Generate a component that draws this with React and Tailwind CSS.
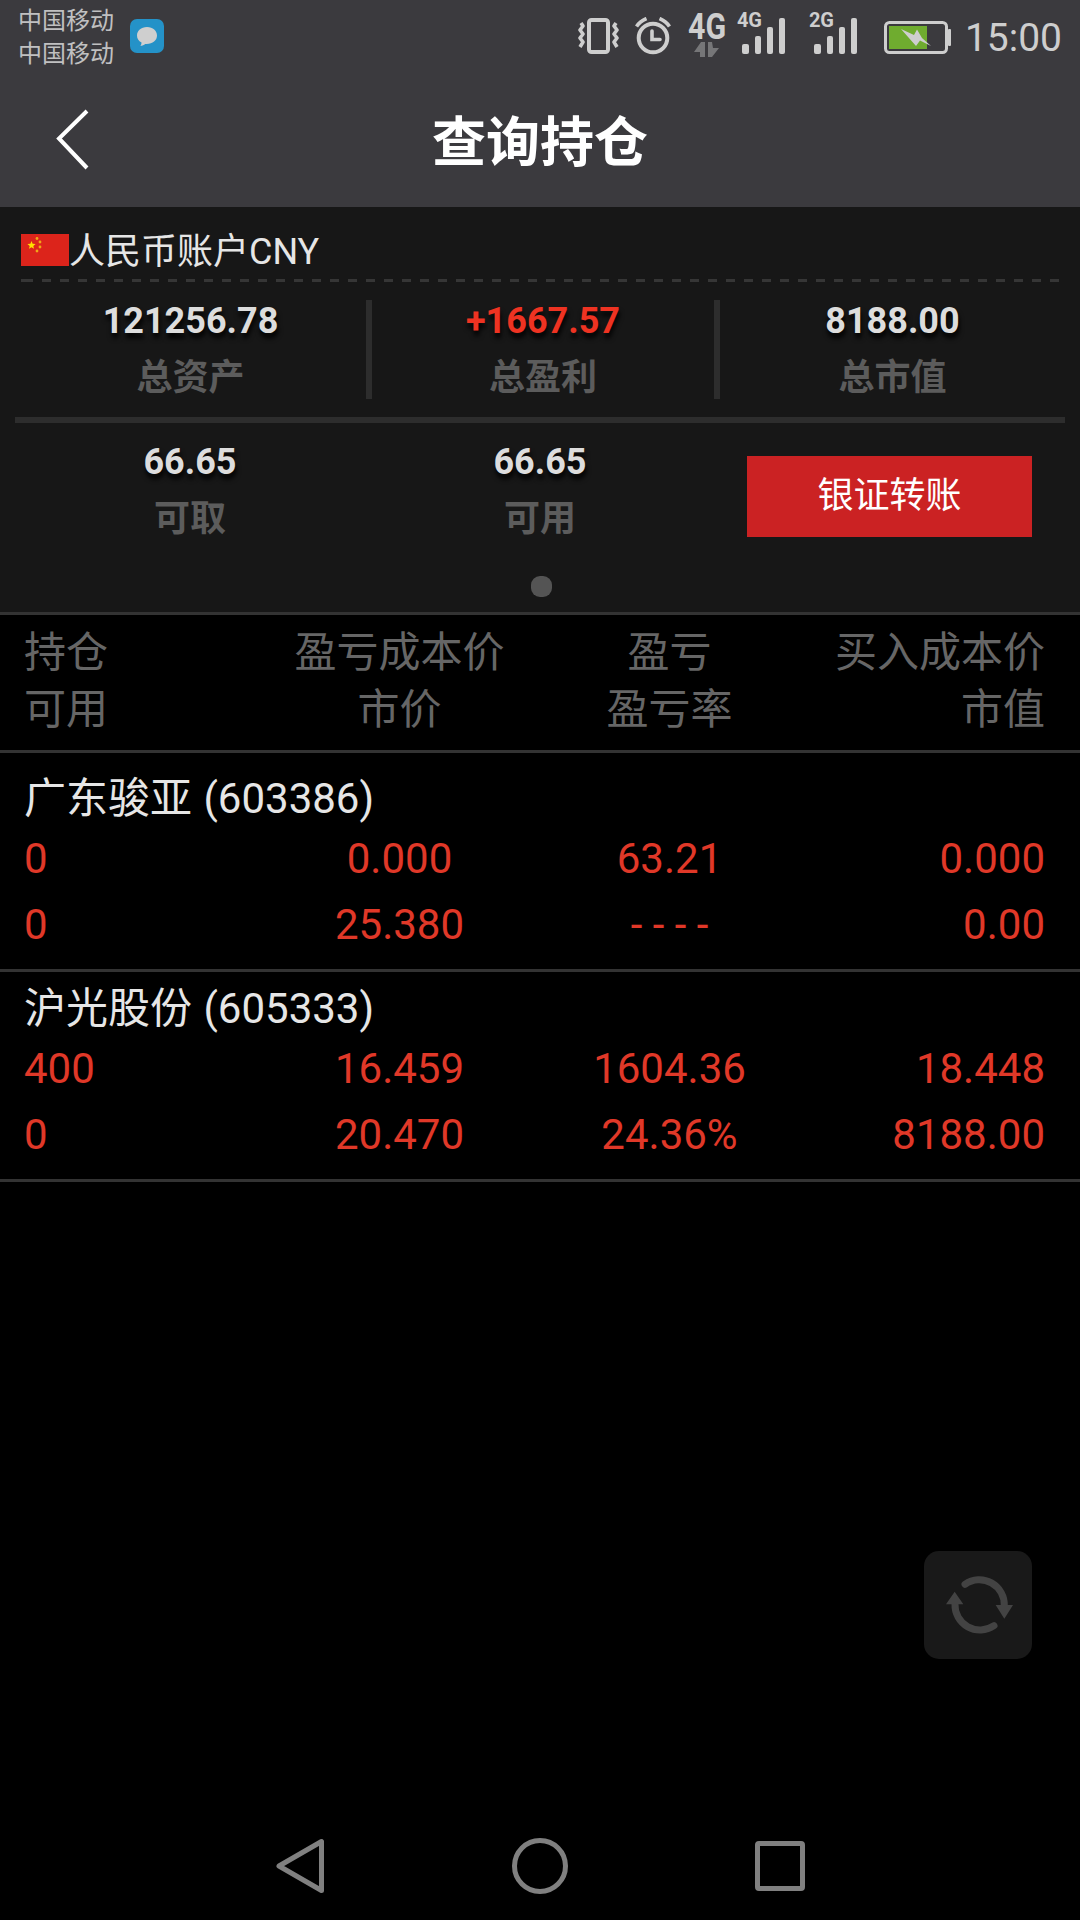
const holdings = [
{
name:"广东骏亚",
code:"603386",
top:["0","0.000","63.21","0.000"],
bottom:["0","25.380","- - - -","0.00"]
},
{
name:"沪光股份",
code:"605333",
top:["400","16.459","1604.36","18.448"],
bottom:["0","20.470","24.36%","8188.00"]
}
];

const columns = [
["持仓","可用"],
["盈亏成本价","市价"],
["盈亏","盈亏率"],
["买入成本价","市值"]
];

const rowGrid = "grid grid-cols-[240px_271px_269px_241px] pl-6 text-[42px]";
const align = ["text-left","text-center","text-center","text-right"];

function Signal({label}){

return(

<div className="relative w-12 h-[42px]">
<span className="absolute left-0 top-px text-[20px] leading-[15px] font-bold">{label}</span>
<svg className="w-12 h-[42px]" viewBox="0 0 48 42" fill="currentColor">
<rect x="5" y="32" width="7" height="10" rx="2"/>
<rect x="18" y="24" width="6" height="18" rx="2"/>
<rect x="30" y="15" width="6" height="27" rx="2"/>
<rect x="42" y="6" width="6" height="36" rx="2"/>
</svg>
</div>

)

}

function StatusBar(){

return(

<div className="h-[72px] flex items-start justify-between pl-[18px] pr-[18px] text-[#cecece]">

<div className="flex">

<div className="text-[24px] leading-[33px] pt-[5px] text-[#c0c0c1]">
<p>中国移动</p>
<p>中国移动</p>
</div>

<svg className="w-[34px] h-[34px] ml-4 mt-[19px]" viewBox="0 0 34 34">
<rect width="34" height="34" rx="7" fill="#2492c8"/>
<path d="M17 8C11 8 7 11.700 7 16.500C7 19.500 8.500 22 11.500 23.500C11.500 25 11 26 10.300 26.800C12.500 26.700 14 26 15.200 24.900C22 25.500 27 21.800 27 16.500C27 11.700 23 8 17 8Z" fill="#cfcfcf"/>
</svg>

</div>

<div className="flex pt-3">

<svg className="w-[41px] h-[38px] mt-[5px] -ml-px" viewBox="0 0 41 38" fill="none" stroke="currentColor">
<rect x="11" y="3" width="19" height="32" rx="2.500" strokeWidth="4"/>
<path d="M3 6L5 9L2 13L5 17L2 21L5 25L2 30M38 6L36 9L39 13L36 17L39 21L36 25L39 30" strokeWidth="3.600" strokeLinejoin="round"/>
</svg>

<svg className="w-[36px] h-[38px] ml-[16px] mt-[5px]" viewBox="0 0 36 38" fill="none" stroke="currentColor">
<circle cx="18" cy="21" r="14.300" strokeWidth="4"/>
<path d="M1.500 9.500Q4.500 4.500 11.500 1.500M34.500 9.500Q31.500 4.500 24.500 1.500" strokeWidth="3.600"/>
<path d="M17 14V22.500H25" strokeWidth="3.600" strokeLinecap="round"/>
</svg>

<div className="w-[38px] ml-[17px]">
<div className="text-[37px] leading-[29px] font-bold origin-left scale-x-[0.82]">4G</div>
<svg className="w-[26px] h-[16px] ml-[6px] mt-px" viewBox="0 0 26 16" fill="#767678">
<path d="M11 0V15H6V10H0L7 0ZM14 0H18L19 6H25L18 15H14Z"/>
</svg>
</div>

<div className="flex ml-[11px] gap-6">
<Signal label="4G"/>
<Signal label="2G"/>
</div>

<svg className="w-[68px] h-[34px] ml-[27px] mt-[9px]" viewBox="0 0 68 34">
<rect x="1.500" y="1.500" width="61" height="30" rx="4" fill="none" stroke="currentColor" strokeWidth="3"/>
<rect x="64" y="8" width="3" height="17" rx="1" fill="currentColor"/>
<rect x="5" y="5" width="38" height="23" fill="#6fac2f"/>
<path d="M17 8L30 14L33 8.500L38 17L47 25L36 19.500L32 25Z" fill="currentColor"/>
</svg>

<div className="ml-[13px] mt-px text-[39px] leading-[50px] h-[50px]">15:00</div>

</div>

</div>

)

}

function Stat({value,label,color = "text-[#dddddd]"}){

return(

<div className="text-center text-[36px] font-bold">
<p className={`pt-px leading-[40px] [text-shadow:1px_5px_5px_#000] ${color}`}>{value}</p>
<p className="mt-[17px] leading-[41px] text-[#5c5c5c]">{label}</p>
</div>

)

}

function Account(){

return(

<section className="h-[405px] bg-[#171717] px-[15px] pt-4">

<div className="h-14 pl-[6px] flex items-start">
<svg className="w-12 h-8 mt-[11px]" viewBox="0 0 48 32">
<rect width="48" height="32" fill="#dc241b"/>
<path d="M10.500 7L11.600 9.800L14.600 10L12.300 11.900L13 14.800L10.500 13.200L8 14.800L8.700 11.900L6.400 10L9.400 9.800Z" fill="#ffe000"/>
<g fill="#f0a818">
<circle cx="16" cy="4.500" r="1.400"/>
<circle cx="19" cy="8" r="1.400"/>
<circle cx="19" cy="13" r="1.400"/>
<circle cx="16" cy="17" r="1.400"/>
</g>
</svg>
<span className="text-[36px] leading-[58px] text-[#e6e6e6]">人民币账户CNY</span>
</div>

<div className="mx-[6px] h-[3px] border-l-[3px] border-[#363636] bg-[repeating-linear-gradient(to_right,#363636_0_9px,transparent_9px_18px)] bg-origin-padding"></div>

<div className="mt-[18px] h-[99px] grid grid-cols-[351px_6px_342px_6px_345px]">
<Stat value="121256.78" label="总资产"/>
<div className="bg-[#2d2d2d]"></div>
<Stat value="+1667.57" label="总盈利" color="text-[#ee3322]"/>
<div className="bg-[#2d2d2d]"></div>
<Stat value="8188.00" label="总市值"/>
</div>

<div className="mt-[18px] h-[6px] bg-[#2d2d2d]"></div>

<div className="grid grid-cols-3 pt-[18px] h-[153px]">
<Stat value="66.65" label="可取"/>
<Stat value="66.65" label="可用"/>
<button className="mt-[15px] ml-8 w-[285px] h-[81px] pb-[2px] bg-[#cb2223] text-white text-[36px]">
银证转账
</button>
</div>

<div className="w-[21px] h-[21px] ml-[516px] rounded-[9px] bg-[#545454]"></div>

</section>

)

}

function Holding({item}){

return(

<div className="h-[210px] border-b-[3px] border-[#333333]">

<h2 className="pl-6 pt-[10px] text-[42px] leading-[54px] text-[#e6e6e6] [word-spacing:1px]">{item.name} ({item.code})</h2>

<div className={`${rowGrid} leading-[66px] text-[#e03828]`}>
{item.top.map((v,i)=>(
<span key={i} className={align[i]}>{v}</span>
))}
{item.bottom.map((v,i)=>(
<span key={i} className={align[i]}>{v}</span>
))}
</div>

</div>

)

}

function App(){

return(

<div className="relative w-[1080px] h-[1920px] overflow-hidden flex flex-col bg-black font-['Roboto','Noto_Sans_CJK_SC',sans-serif]">

<header className="h-[207px] bg-[#3b3a3e]">

<StatusBar/>

<div className="h-[135px] grid grid-cols-[150px_1fr_150px]">
<svg className="w-[36px] h-[64px] ml-[55px] mt-[35px]" viewBox="0 0 36 64" fill="none" stroke="white" strokeWidth="4">
<path d="M32 4L4 31.500L32 61"/>
</svg>
<h1 className="text-center text-[54px] leading-[144px] font-bold text-white">查询持仓</h1>
</div>

</header>

<Account/>

<div className={`${rowGrid} h-[141px] pt-[9px] border-y-[3px] border-[#333333] leading-[57px] text-[#666666]`}>
{columns.map((c,i)=>(
<div key={i} className={align[i]}>
<p>{c[0]}</p>
<p>{c[1]}</p>
</div>
))}
</div>

<main className="pt-[9px]">
{holdings.map((item)=>(
<Holding key={item.code} item={item}/>
))}
</main>

<button className="absolute left-[924px] top-[1551px] w-[108px] h-[108px] rounded-[15px] bg-[#191919]">
<svg className="w-[108px] h-[108px]" viewBox="72 63 324 324" fill="none" stroke="#434343" strokeWidth="21">
<path d="M195 163A75 75 0 0 1 313 228M282 287A75 75 0 0 1 165 222" strokeLinecap="round"/>
<path d="M287 225H339L313 266ZM138 223H190L164 185Z" fill="#434343" stroke="none"/>
</svg>
</button>

<nav className="mt-auto h-[108px] grid grid-cols-[240px_1fr_240px] items-center px-[180px]">
<svg className="w-[50px] h-[56px] ml-[95px]" viewBox="0 0 50 56" fill="none" stroke="#808080" strokeWidth="5" strokeLinejoin="round">
<path d="M46.500 3.500V52.500L4 28Z"/>
</svg>
<div className="w-14 h-14 mx-auto rounded-full border-[5px] border-[#808080]"></div>
<div className="w-[50px] h-[50px] ml-[95px] rounded-[4px] border-[5px] border-[#808080]"></div>
</nav>

</div>

)

}

export default App;
